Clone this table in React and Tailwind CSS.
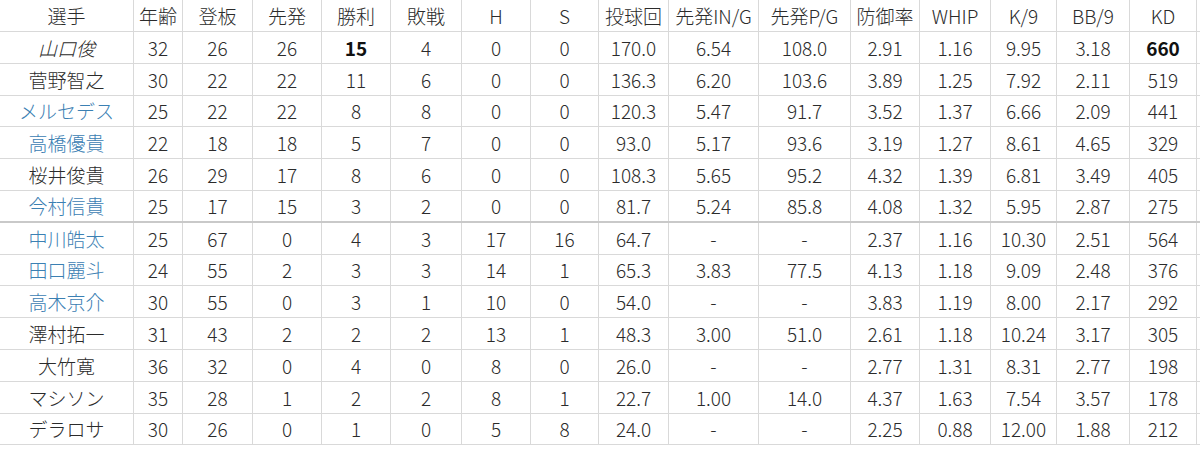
import React from 'react';

const headers = ['選手', '年齢', '登板', '先発', '勝利', '敗戦', 'H', 'S', '投球回', '先発IN/G', '先発P/G', '防御率', 'WHIP', 'K/9', 'BB/9', 'KD'];

// name, blue?, stats...
const rows = [
  { name: '山口俊', italic: true, v: ['32', '26', '26', '15', '4', '0', '0', '170.0', '6.54', '108.0', '2.91', '1.16', '9.95', '3.18', '660'], bold: [3, 14] },
  { name: '菅野智之', v: ['30', '22', '22', '11', '6', '0', '0', '136.3', '6.20', '103.6', '3.89', '1.25', '7.92', '2.11', '519'] },
  { name: 'メルセデス', blue: true, v: ['25', '22', '22', '8', '8', '0', '0', '120.3', '5.47', '91.7', '3.52', '1.37', '6.66', '2.09', '441'] },
  { name: '高橋優貴', blue: true, v: ['22', '18', '18', '5', '7', '0', '0', '93.0', '5.17', '93.6', '3.19', '1.27', '8.61', '4.65', '329'] },
  { name: '桜井俊貴', v: ['26', '29', '17', '8', '6', '0', '0', '108.3', '5.65', '95.2', '4.32', '1.39', '6.81', '3.49', '405'] },
  { name: '今村信貴', blue: true, split: true, v: ['25', '17', '15', '3', '2', '0', '0', '81.7', '5.24', '85.8', '4.08', '1.32', '5.95', '2.87', '275'] },
  { name: '中川皓太', blue: true, v: ['25', '67', '0', '4', '3', '17', '16', '64.7', '-', '-', '2.37', '1.16', '10.30', '2.51', '564'] },
  { name: '田口麗斗', blue: true, v: ['24', '55', '2', '3', '3', '14', '1', '65.3', '3.83', '77.5', '4.13', '1.18', '9.09', '2.48', '376'] },
  { name: '高木京介', blue: true, v: ['30', '55', '0', '3', '1', '10', '0', '54.0', '-', '-', '3.83', '1.19', '8.00', '2.17', '292'] },
  { name: '澤村拓一', v: ['31', '43', '2', '2', '2', '13', '1', '48.3', '3.00', '51.0', '2.61', '1.18', '10.24', '3.17', '305'] },
  { name: '大竹寛', v: ['36', '32', '0', '4', '0', '8', '0', '26.0', '-', '-', '2.77', '1.31', '8.31', '2.77', '198'] },
  { name: 'マシソン', v: ['35', '28', '1', '2', '2', '8', '1', '22.7', '1.00', '14.0', '4.37', '1.63', '7.54', '3.57', '178'] },
  { name: 'デラロサ', v: ['30', '26', '0', '1', '0', '5', '8', '24.0', '-', '-', '2.25', '0.88', '12.00', '1.88', '212'] },
];

const cols = 'grid grid-cols-[134px_49px_70px_69px_69px_71px_69px_68px_70px_90px_92px_69px_71px_66px_73px_67px]';

const Cell = ({ children, className = '' }) => (
  <div className={`flex items-center justify-center border-r border-[#d9d9d9] whitespace-nowrap ${className}`}>
    {children}
  </div>
);

export default function App() {
  return (
    <div className="w-[1200px] h-[449px] bg-white text-[19px] font-light text-[#2b2b2b] font-['Noto_Sans_CJK_JP','Noto_Sans',sans-serif] leading-none">
      <div className={`${cols} h-[32px] border-b border-[#d9d9d9]`}>
        {headers.map((h) => (
          <Cell key={h}>{h}</Cell>
        ))}
      </div>
      {rows.map((r) => (
        <div
          key={r.name}
          className={`${cols} h-[31.8px] ${r.split ? 'border-b-2 border-[#c9c9c9]' : 'border-b border-[#d9d9d9]'}`}
        >
          <Cell className={`${r.blue ? 'text-[#3b80b3]' : ''} ${r.italic ? 'italic' : ''}`}>{r.name}</Cell>
          {r.v.map((x, i) => (
            <Cell key={i} className={r.bold && r.bold.includes(i) ? 'font-bold text-[#111]' : ''}>
              {x}
            </Cell>
          ))}
        </div>
      ))}
    </div>
  );
}
